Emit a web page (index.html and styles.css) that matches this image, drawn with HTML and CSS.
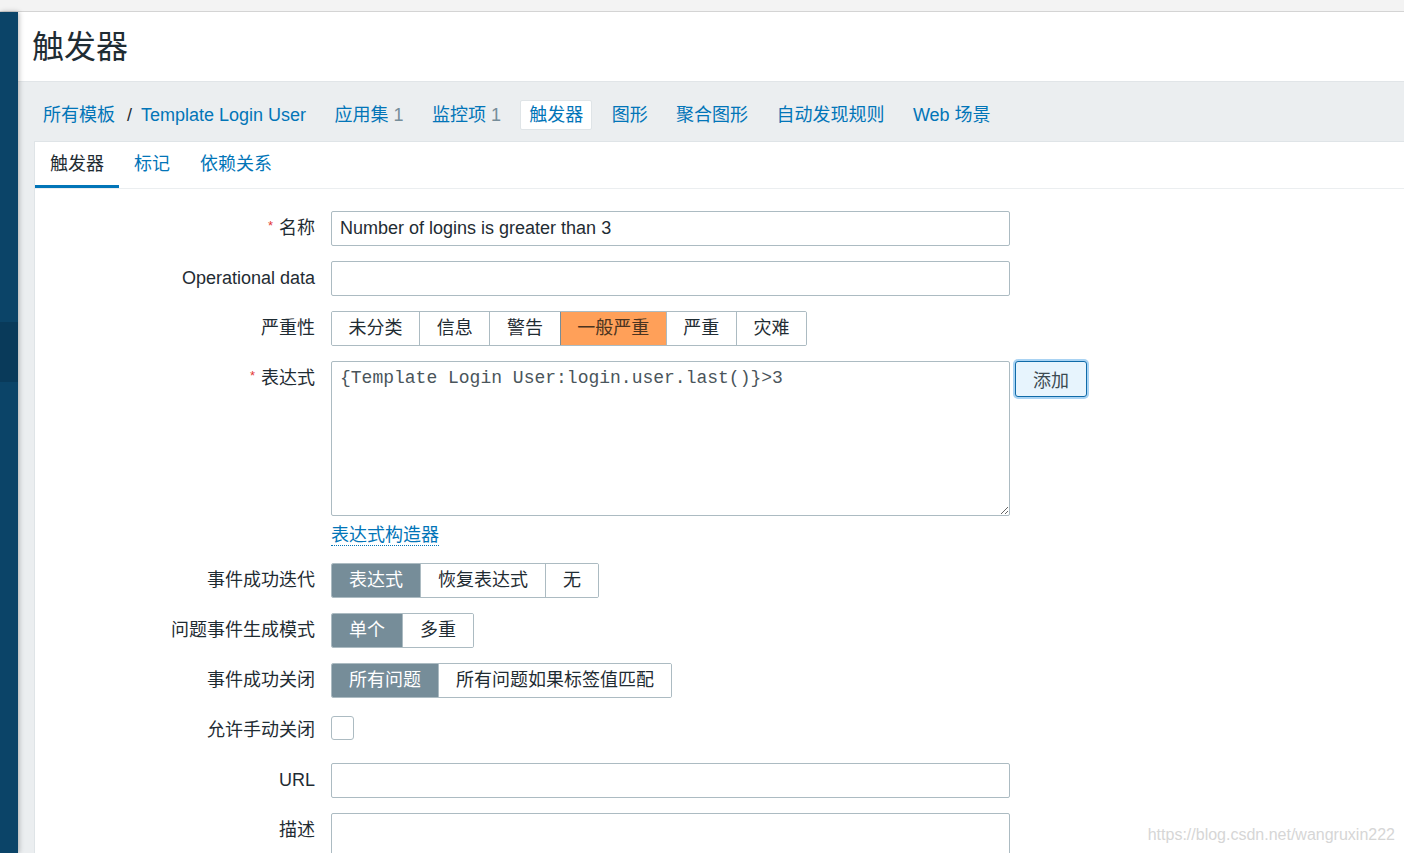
FILE: index.html
```html
<!DOCTYPE html>
<html lang="zh-CN">
<head>
<meta charset="utf-8">
<title>触发器</title>
<link rel="stylesheet" href="styles.css">
</head>
<body>
<div class="topbar"></div>
<div class="layout">
  <aside class="sidebar">
    <div class="side-top"></div>
    <div class="side-active"></div>
  </aside>
  <main class="main">
    <header class="page-header"><h1>触发器</h1></header>
    <nav class="crumbs">
      <div class="crumb-group">
        <a class="nav-item">所有模板</a><span class="sep">/</span><a class="nav-item">Template Login User</a>
      </div>
      <a class="nav-item">应用集<span class="count"> 1</span></a>
      <a class="nav-item">监控项<span class="count"> 1</span></a>
      <a class="nav-item active">触发器</a>
      <a class="nav-item">图形</a>
      <a class="nav-item">聚合图形</a>
      <a class="nav-item">自动发现规则</a>
      <a class="nav-item">Web 场景</a>
    </nav>
    <section class="panel">
      <div class="tabs">
        <a class="tab active">触发器</a>
        <a class="tab">标记</a>
        <a class="tab">依赖关系</a>
      </div>
      <div class="form">
        <label class="label"><span class="req">*</span>名称</label>
        <div class="field"><input class="input" type="text" value="Number of logins is greater than 3"></div>

        <label class="label">Operational data</label>
        <div class="field"><input class="input" type="text" value=""></div>

        <label class="label">严重性</label>
        <div class="field">
          <div class="seg sev">
            <span class="seg-btn">未分类</span>
            <span class="seg-btn">信息</span>
            <span class="seg-btn">警告</span>
            <span class="seg-btn sev-on">一般严重</span>
            <span class="seg-btn">严重</span>
            <span class="seg-btn">灾难</span>
          </div>
        </div>

        <label class="label"><span class="req">*</span>表达式</label>
        <div class="field tall">
          <div class="expr-row">
            <textarea class="expr" spellcheck="false">{Template Login User:login.user.last()}&gt;3</textarea>
            <button class="add-btn" type="button">添加</button>
          </div>
          <div class="builder"><a class="builder-link">表达式构造器</a></div>
        </div>

        <label class="label">事件成功迭代</label>
        <div class="field">
          <div class="seg">
            <span class="seg-btn on">表达式</span>
            <span class="seg-btn">恢复表达式</span>
            <span class="seg-btn">无</span>
          </div>
        </div>

        <label class="label">问题事件生成模式</label>
        <div class="field">
          <div class="seg">
            <span class="seg-btn on">单个</span>
            <span class="seg-btn">多重</span>
          </div>
        </div>

        <label class="label">事件成功关闭</label>
        <div class="field">
          <div class="seg">
            <span class="seg-btn on">所有问题</span>
            <span class="seg-btn">所有问题如果标签值匹配</span>
          </div>
        </div>

        <label class="label">允许手动关闭</label>
        <div class="field"><span class="checkbox"></span></div>

        <label class="label">URL</label>
        <div class="field"><input class="input" type="text" value=""></div>

        <label class="label">描述</label>
        <div class="field tall"><textarea class="desc"></textarea></div>
      </div>
    </section>
  </main>
</div>
<div class="watermark">https://blog.csdn.net/wangruxin222</div>
</body>
</html>
```

FILE: styles.css
```css
html, body {
  margin: 0;
  padding: 0;
  height: 853px;
  overflow: hidden;
}
body {
  font-family: "Liberation Sans", Arial, "Noto Sans CJK SC", sans-serif;
  font-size: 18px;
  color: #1f2c33;
  background: #ebeef0;
}
a { color: #0275b8; text-decoration: none; }

.topbar {
  height: 11px;
  background: #f3f3f3;
  border-bottom: 1px solid #d4d4d4;
}
.layout {
  display: flex;
  height: 841px;
}
.sidebar {
  width: 18px;
  flex: 0 0 18px;
  background: #0b4468;
  box-shadow: 1px 0 5px rgba(0, 0, 0, 0.28);
  position: relative;
  z-index: 1;
}
.side-top { height: 310px; }
.side-active { height: 60px; background: #093a5a; }

.main {
  flex: 1;
  display: flex;
  flex-direction: column;
  min-width: 0;
}
.page-header {
  flex: 0 0 auto;
  height: 69px;
  background: #fff;
  border-bottom: 1px solid #e1e5e8;
  padding-left: 14px;
}
.page-header h1 {
  margin: 0;
  font-size: 32px;
  font-weight: normal;
  line-height: 70px;
  color: #1f2c33;
}

.crumbs {
  flex: 0 0 auto;
  height: 59px;
  box-sizing: border-box;
  padding: 18px 0 0 16px;
  display: flex;
  align-items: flex-start;
  gap: 10.4px;
  background: #ebeef0;
}
.crumb-group { display: flex; align-items: center; }
.nav-item {
  display: block;
  height: 30px;
  line-height: 28px;
  padding: 0 8px;
  box-sizing: border-box;
  white-space: nowrap;
  border: 1px solid transparent;
  border-radius: 2px;
}
.nav-item.active {
  background: #fff;
  border-color: #dfe4e7;
  color: #0275b8;
}
.sep { color: #1f2c33; padding-left: 3px; line-height: 30px; }
.count { color: #768d99; }

.panel {
  flex: 1 0 auto;
  margin-left: 16px;
  background: #fff;
  border-left: 1px solid #dfe4e7;
  border-top: 1px solid #dfe4e7;
}
.tabs {
  display: flex;
  border-bottom: 1px solid #ebeef0;
}
.tab {
  padding: 2px 15px 0;
  line-height: 41px;
  border-bottom: 3px solid transparent;
  color: #0275b8;
}
.tab.active {
  color: #1f2c33;
  border-bottom-color: #0275b8;
}

.form {
  display: grid;
  grid-template-columns: 280px 679px 1fr;
  column-gap: 16px;
  row-gap: 15px;
  padding-top: 22px;
}
.label {
  grid-column: 1;
  height: 35px;
  text-align: right;
  line-height: 35px;
  white-space: nowrap;
  color: #1f2c33;
}
.field {
  grid-column: 2 / 4;
  height: 35px;
}
.field.tall { height: auto; }
.req {
  color: #e33734;
  font-size: 13px;
  line-height: 1;
  vertical-align: 4px;
  margin-right: 6px;
}
.input {
  display: block;
  width: 679px;
  height: 35px;
  box-sizing: border-box;
  border: 1px solid #acbbc2;
  border-radius: 2px;
  padding: 0 8px;
  font-family: "Liberation Sans", Arial, "Noto Sans CJK SC", sans-serif;
  font-size: 18px;
  color: #1f2c33;
  background: #fff;
  outline: none;
}

.seg {
  display: inline-flex;
  height: 35px;
  box-sizing: border-box;
  border: 1px solid #acbbc2;
  border-radius: 2px;
  overflow: hidden;
  vertical-align: top;
}
.seg-btn {
  padding: 0 17px;
  line-height: 33px;
  white-space: nowrap;
  color: #1f2c33;
  background: #fff;
  border-left: 1px solid #acbbc2;
}
.sev .seg-btn { padding: 0 16.6px; }
.seg-btn:first-child { border-left: none; }
.seg-btn.on {
  background: #768d99;
  color: #fff;
  border-color: #768d99;
}
.seg-btn.sev-on {
  background: #ffa059;
  color: #4a3320;
  border-left-color: #768d99;
}

.expr-row {
  display: flex;
  align-items: flex-start;
  gap: 5px;
}
.expr {
  display: block;
  width: 679px;
  height: 155px;
  box-sizing: border-box;
  border: 1px solid #acbbc2;
  border-radius: 2px;
  padding: 5px 8px;
  margin: 0;
  font-family: "Liberation Mono", "Courier New", monospace;
  font-size: 18px;
  line-height: 22px;
  color: #4a555b;
  outline: none;
  resize: both;
}
.add-btn {
  width: 72px;
  height: 36px;
  box-sizing: border-box;
  background: #e7f4fd;
  border: 1px solid #0f6aa8;
  border-radius: 3px;
  box-shadow: 0 0 0 2px #a9d3f3;
  font-family: "Liberation Sans", Arial, "Noto Sans CJK SC", sans-serif;
  font-size: 18px;
  color: #3b4a52;
  padding: 0;
  margin: 0;
}
.builder {
  margin-top: 7px;
  height: 25px;
  line-height: 25px;
}
.builder-link {
  color: #0275b8;
  border-bottom: 1px dotted #0275b8;
}

.checkbox {
  display: block;
  width: 23px;
  height: 24px;
  box-sizing: border-box;
  margin-top: 3px;
  border: 1px solid #acbbc2;
  border-radius: 3px;
  background: #fff;
}
.desc {
  display: block;
  width: 679px;
  height: 120px;
  box-sizing: border-box;
  border: 1px solid #acbbc2;
  border-radius: 2px;
  margin: 0;
  resize: none;
  outline: none;
}

.watermark {
  position: absolute;
  right: 9px;
  bottom: 9px;
  font-family: "Liberation Sans", Arial, sans-serif;
  font-size: 16px;
  color: #d6d6d6;
}
```
